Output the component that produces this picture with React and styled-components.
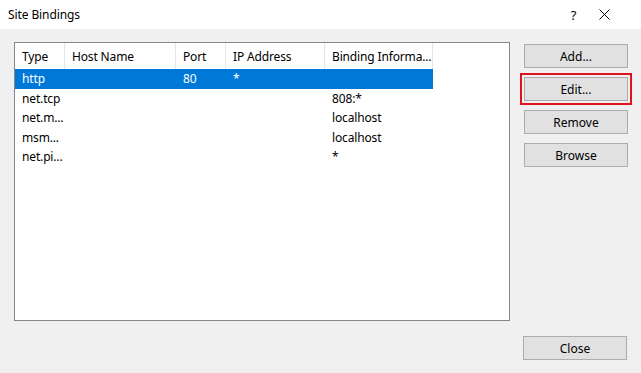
import React from "react";
import styled, { createGlobalStyle } from "styled-components";

const Global = createGlobalStyle`
  html, body { margin: 0; padding: 0; }
  body {
    width: 641px;
    height: 373px;
    overflow: hidden;
    font-family: "Noto Sans", "Segoe UI", sans-serif;
    font-size: 12px;
    color: #000;
  }
`;

const Window = styled.div`
  width: 641px;
  height: 373px;
  display: flex;
  flex-direction: column;
  background: #f0f0f0;
`;

const TitleBar = styled.div`
  height: 29px;
  flex-shrink: 0;
  background: #fff;
  display: flex;
  align-items: center;
  padding-left: 8px;
  padding-right: 21px;
  box-sizing: border-box;
`;

const Title = styled.div`
  flex: 1;
  font-size: 12px;
  line-height: 16px;
  letter-spacing: -0.1px;
`;

const TitleButton = styled.div`
  width: 31px;
  flex-shrink: 0;
  height: 29px;
  display: flex;
  align-items: center;
  justify-content: center;
  font-size: 13px;
  color: #000;
`;

const Body = styled.div`
  flex: 1;
  display: flex;
  flex-direction: column;
  padding: 13px 13px 11px 14px;
`;

const MainRow = styled.div`
  display: flex;
  gap: 14px;
  height: 279px;
  flex-shrink: 0;
`;

const ListBox = styled.div`
  width: 496px;
  box-sizing: border-box;
  border: 1px solid #828790;
  background: #fff;
`;

const Table = styled.div`
  display: grid;
  grid-template-columns: 50px 111px 50px 99px 108px;
  width: 418px;
  letter-spacing: -0.15px;
`;

const HeaderCell = styled.div`
  height: 26px;
  line-height: 24px;
  padding-top: 2px;
  padding-left: 7px;
  border-right: 1px solid #e5e5e5;
  white-space: nowrap;
  overflow: hidden;
  box-sizing: border-box;
`;

const Cell = styled.div`
  height: 19.5px;
  line-height: 19.5px;
  padding-left: 7px;
  white-space: nowrap;
  overflow: hidden;
  box-sizing: border-box;
  background: ${(p) => (p.$selected ? "#0078d7" : "transparent")};
  color: ${(p) => (p.$selected ? "#fff" : "#000")};
`;

const ButtonColumn = styled.div`
  display: flex;
  flex-direction: column;
  gap: 9px;
  padding-top: 2px;
`;

const Button = styled.button`
  width: 104px;
  height: 24px;
  box-sizing: border-box;
  background: #e1e1e1;
  border: 1px solid #adadad;
  font-family: "Noto Sans", "Segoe UI", sans-serif;
  font-size: 12px;
  color: #000;
  padding: 0;
  margin: 0;
  outline: ${(p) => (p.$highlighted ? "2px solid #e0121b" : "none")};
  outline-offset: 2px;
`;

const Footer = styled.div`
  display: flex;
  justify-content: flex-end;
  margin-top: 15px;
  padding-right: 1px;
`;

const columns = ["Type", "Host Name", "Port", "IP Address", "Binding Informa..."];
const rows = [
  ["http", "", "80", "*", ""],
  ["net.tcp", "", "", "", "808:*"],
  ["net.m...", "", "", "", "localhost"],
  ["msm...", "", "", "", "localhost"],
  ["net.pi...", "", "", "", "*"],
];

export default function App() {
  return (
    <>
      <Global />
      <Window>
        <TitleBar>
          <Title>Site Bindings</Title>
          <TitleButton>?</TitleButton>
          <TitleButton>
            <svg width="11" height="11" viewBox="0 0 11 11">
              <path d="M0.5 0.5 L10.5 10.5 M10.5 0.5 L0.5 10.5" stroke="#000" strokeWidth="1" />
            </svg>
          </TitleButton>
        </TitleBar>
        <Body>
          <MainRow>
            <ListBox>
              <Table>
                {columns.map((c) => (
                  <HeaderCell key={c}>{c}</HeaderCell>
                ))}
                {rows.map((r, i) =>
                  r.map((v, j) => (
                    <Cell key={i + "-" + j} $selected={i === 0}>
                      {v}
                    </Cell>
                  ))
                )}
              </Table>
            </ListBox>
            <ButtonColumn>
              <Button>Add...</Button>
              <Button $highlighted>Edit...</Button>
              <Button>Remove</Button>
              <Button>Browse</Button>
            </ButtonColumn>
          </MainRow>
          <Footer>
            <Button>Close</Button>
          </Footer>
        </Body>
      </Window>
    </>
  );
}
